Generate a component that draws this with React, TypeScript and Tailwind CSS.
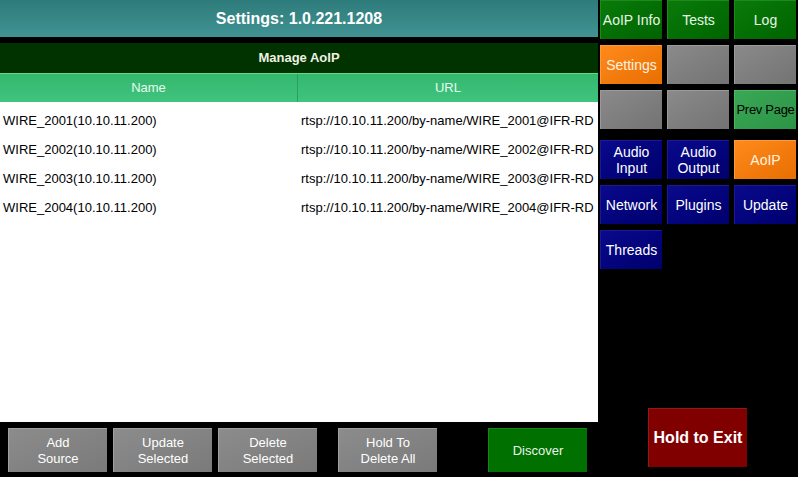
import type { ReactNode } from "react";

const rows = [
  { name: "WIRE_2001(10.10.11.200)", url: "rtsp://10.10.11.200/by-name/WIRE_2001@IFR-RD" },
  { name: "WIRE_2002(10.10.11.200)", url: "rtsp://10.10.11.200/by-name/WIRE_2002@IFR-RD" },
  { name: "WIRE_2003(10.10.11.200)", url: "rtsp://10.10.11.200/by-name/WIRE_2003@IFR-RD" },
  { name: "WIRE_2004(10.10.11.200)", url: "rtsp://10.10.11.200/by-name/WIRE_2004@IFR-RD" },
];

type Tone = "green" | "orange" | "gray" | "blue" | "light";

const tones: Record<Tone, string> = {
  green: "bg-gradient-to-br from-[#0a7a0a] to-[#006400] text-[#e8f5e8] border-[#1d8a1d]",
  orange: "bg-gradient-to-br from-[#ff8a1a] to-[#e86e00] text-[#fff3e0] border-[#ff9a3a]",
  gray: "bg-gradient-to-br from-[#8a8a8a] to-[#737373] text-white border-[#9a9a9a]",
  blue: "bg-gradient-to-br from-[#0a0a8c] to-[#00006e] text-white border-[#1a1a99]",
  light: "bg-gradient-to-br from-[#3aa856] to-[#2b9444] text-black border-[#4cb866]",
};

const NavButton = ({ label, tone }: { label?: ReactNode; tone: Tone }) => (
  <div
    className={`h-[39px] flex items-center justify-center text-center leading-[16px] border-t border-l text-[14px] whitespace-nowrap ${tones[tone]}`}
  >
    {label}
  </div>
);

const nav: { label?: ReactNode; tone: Tone }[] = [
  { label: "AoIP Info", tone: "green" },
  { label: "Tests", tone: "green" },
  { label: "Log", tone: "green" },
  { label: "Settings", tone: "orange" },
  { tone: "gray" },
  { tone: "gray" },
  { tone: "gray" },
  { tone: "gray" },
  { label: <span className="text-[13px] tracking-[-0.3px]">Prev Page</span>, tone: "light" },
];

const grayBtn =
  "w-[99px] h-[44px] bg-gradient-to-br from-[#8c8c8c] to-[#7a7a7a] border-t border-l border-[#a0a0a0] text-white";

const App = () => {
  return (
    <div
      className="w-[798px] h-[477px] bg-black flex overflow-hidden"
      style={{ fontFamily: '"Liberation Sans", Arial, sans-serif' }}
    >
      {/* main panel */}
      <div className="w-[598px] flex flex-col">
        <div className="h-[37px] bg-gradient-to-b from-[#2e7b7b] to-[#419393] flex items-center justify-center text-white font-bold text-[16px]">
          Settings: 1.0.221.1208
        </div>
        <div className="h-[6px] bg-black" />
        <div className="h-[30px] bg-[#003300] flex items-center justify-center text-[#f0f0e0] font-bold text-[13px]">
          Manage AoIP
        </div>
        <div className="h-[29px] flex bg-gradient-to-b from-[#34b86e] to-[#40c47e] border-t border-[#5fd890] text-[#e6fbef] text-[13px]">
          <div className="w-[298px] flex items-center justify-center border-r border-[#2aa05c]">Name</div>
          <div className="flex-1 flex items-center justify-center">URL</div>
        </div>
        <div className="h-[320px] bg-white pt-[9px]">
          {rows.map((r) => (
            <div key={r.name} className="h-[29px] flex text-[13px] text-black">
              <div className="w-[301px] pl-[3px]">{r.name}</div>
              <div className="flex-1 whitespace-nowrap">{r.url}</div>
            </div>
          ))}
        </div>
        <div className="flex pl-[8px] pt-[6px] gap-[6px] text-[13px] leading-[16px]">
          <button className={grayBtn}>
            Add<br />Source
          </button>
          <button className={grayBtn}>
            Update<br />Selected
          </button>
          <button className={grayBtn}>
            Delete<br />Selected
          </button>
          <button className={`ml-[15px] ${grayBtn}`}>
            Hold To<br />Delete All
          </button>
          <button className="ml-[45px] w-[99px] h-[44px] bg-[#007000] border-t border-l border-[#1a851a] text-[#e8f5e8]">
            Discover
          </button>
        </div>
      </div>

      {/* side nav */}
      <div className="flex-1 flex flex-col pl-[2px] pr-[2px]">
        <div className="grid grid-cols-3 gap-x-[5px] gap-y-[6px]">
          {nav.map((n, i) => (
            <NavButton key={i} label={n.label} tone={n.tone} />
          ))}
        </div>
        <div className="grid grid-cols-3 gap-x-[5px] gap-y-[6px] mt-[11px]">
          <NavButton label={<>Audio<br />Input</>} tone="blue" />
          <NavButton label={<>Audio<br />Output</>} tone="blue" />
          <NavButton label="AoIP" tone="orange" />
          <NavButton label="Network" tone="blue" />
          <NavButton label="Plugins" tone="blue" />
          <NavButton label="Update" tone="blue" />
          <NavButton label="Threads" tone="blue" />
        </div>
        <div className="flex-1 flex items-end pb-[10px] pl-[48px]">
          <button className="w-[99px] h-[59px] bg-[#800000] border-t border-l border-[#8f1a1a] text-white font-bold text-[16px]">
            Hold to Exit
          </button>
        </div>
      </div>
    </div>
  );
};

export default App;
